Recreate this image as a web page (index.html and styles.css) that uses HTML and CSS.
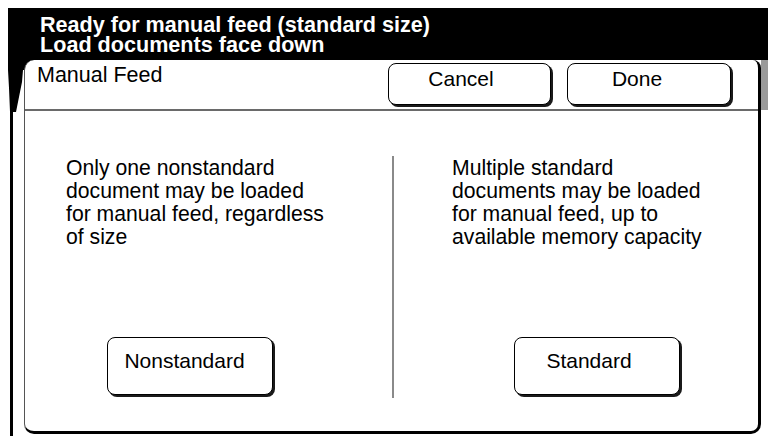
FILE: index.html
```html
<!DOCTYPE html>
<html lang="en">

<head>
    <meta charset="UTF-8">
    <meta name="viewport" content="width=device-width, initial-scale=1.0">
    <title>Manual Feed</title>
    <link rel="stylesheet" href="styles.css">
</head>

<body>
    <div class="screen">
        <header class="banner">
            <p>Ready for manual feed (standard size)</p>
            <p>Load documents face down</p>
        </header>

        <div class="frame">
            <div class="rail"></div>

            <section class="card">
                <div class="tab-row">
                    <h1 class="tab-title">Manual Feed</h1>
                    <div class="tab-actions">
                        <button class="btn btn-cancel">Cancel</button>
                        <button class="btn btn-done">Done</button>
                    </div>
                </div>

                <div class="panel">
                    <div class="option option-left">
                        <p>Only one nonstandard<br>document may be loaded<br>for manual feed, regardless<br>of size</p>
                        <button class="btn btn-big btn-nonstd">Nonstandard</button>
                    </div>
                    <div class="option option-right">
                        <p>Multiple standard<br>documents may be loaded<br>for manual feed, up to<br>available memory capacity</p>
                        <button class="btn btn-big btn-std">Standard</button>
                    </div>
                </div>
            </section>

            <div class="gutter"></div>
        </div>
    </div>
</body>

</html>
```

FILE: styles.css
```css
* {
    box-sizing: border-box;
}

body {
    margin: 0;
    background-color: #fff;
    font-family: 'Liberation Sans', Arial, sans-serif;
    color: #000;
    overflow: hidden;
}

.screen {
    width: 768px;
    height: 436px;
    padding: 8px 0 0 8px;
    display: flex;
    flex-direction: column;
}

.banner {
    background-color: #000;
    color: #fff;
    padding: 7px 0 5px 32px;
}

.banner p {
    margin: 0;
    font-size: 21.6px;
    font-weight: bold;
    line-height: 20px;
    white-space: nowrap;
}

.frame {
    flex: 1;
    display: flex;
    position: relative;
}

/* black flap under the banner, curling into the left rail */
.frame::before {
    content: '';
    position: absolute;
    left: 0;
    top: 0;
    width: 32px;
    height: 52px;
    background: #000;
    clip-path: polygon(0 0, 32px 0, 32px 10px, 15px 10px, 14px 22px, 8px 52px, 2px 52px, 1px 28px, 0 10px);
}

.rail {
    width: 16px;
    flex: none;
    background: linear-gradient(to right, transparent 2px, #000 2px, #000 5px, transparent 5px);
}

.card {
    position: relative;
    z-index: 1;
    width: 737px;
    flex: none;
    margin-bottom: 2px;
    background-color: #fff;
    border-left: 1px solid #555;
    border-right: 3px solid #000;
    border-bottom: 3px solid #000;
    border-radius: 10px 8px 10px 10px;
    display: flex;
    flex-direction: column;
}

.gutter {
    flex: 1;
    background: linear-gradient(#9a9a9a 50px, transparent 50px);
}

.tab-row {
    display: flex;
    align-items: flex-start;
    height: 51px;
    padding: 3px 27px 0 12px;
    border-bottom: 2px solid #6a6a6a;
}

.tab-title {
    margin: 0;
    font-size: 21.5px;
    font-weight: normal;
    line-height: 24px;
}

.tab-actions {
    margin-left: auto;
    display: flex;
    gap: 16px;
}

.btn {
    font-family: 'Liberation Sans', Arial, sans-serif;
    font-size: 21px;
    line-height: 24px;
    color: #000;
    background-color: #fff;
    border: 1px solid #000;
    border-radius: 8px;
    box-shadow: 2px 2px 0 #1a1a1a;
    height: 42px;
    padding: 3px 0 0;
    display: flex;
    justify-content: center;
    align-items: flex-start;
}

.btn-cancel {
    width: 163px;
    padding-right: 17px;
}

.btn-done {
    width: 164px;
    padding-right: 24px;
}

.panel {
    flex: 1;
    display: flex;
    padding: 45px 0 33px;
}

.option {
    display: flex;
    flex-direction: column;
    justify-content: space-between;
    align-items: flex-start;
}

.option p {
    margin: 0;
    font-size: 21.2px;
    line-height: 23px;
}

.option-left {
    width: 367px;
    padding-left: 41px;
}

.option-right {
    flex: 1;
    padding-left: 58px;
    border-left: 2px solid #8a8a8a;
}

.btn-big {
    width: 166px;
    height: 58px;
    padding-top: 11px;
    margin-bottom: 3px;
}

.btn-nonstd {
    margin-left: 41px;
    padding-right: 11px;
}

.btn-std {
    margin-left: 62px;
    padding-right: 16px;
}
```
